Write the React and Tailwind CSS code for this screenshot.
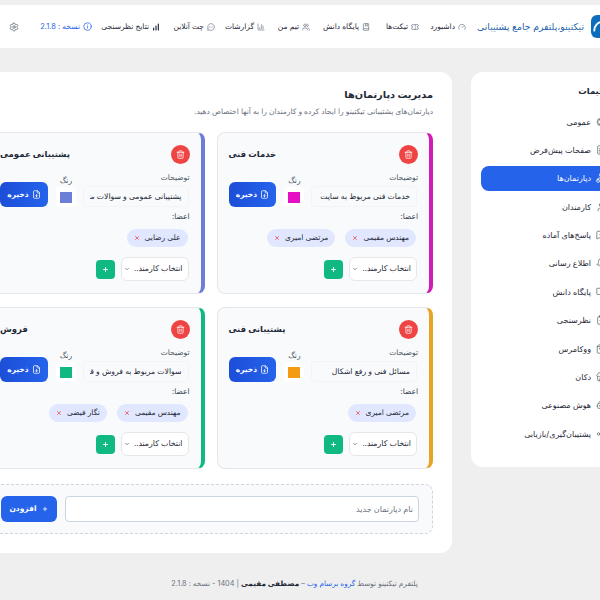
import { Gauge, Ticket, BookMarked, Users, BarChart3, MessageCircleMore, BarChart, Info, Settings, Cog, FileText, Network, User, MessageSquarePlus, Bell, BookOpen, ClipboardCheck, ShoppingBag, Store, Bot, Share2, Trash2, FileDown, Plus, X, ChevronDown } from 'lucide-react'

const nav = [
  { icon: Gauge, label: 'داشبورد', width: 'w-[47px]' },
  { icon: Ticket, label: 'تیکت‌ها', width: 'w-[49px]' },
  { icon: BookMarked, label: 'پایگاه دانش', width: 'w-[60px]' },
  { icon: Users, label: 'تیم من', width: 'w-[45px]' },
  { icon: BarChart3, label: 'گزارشات', width: 'w-[50px]' },
  { icon: MessageCircleMore, label: 'چت آنلاین', width: 'w-[55px]' },
  { icon: BarChart, label: 'نتایج نظرسنجی', width: 'w-[68px]', strong: true },
]

const side = [
  { icon: Cog, label: 'عمومی' },
  { icon: FileText, label: 'صفحات پیش‌فرض' },
  { icon: Network, label: 'دپارتمان‌ها', active: true },
  { icon: User, label: 'کارمندان' },
  { icon: MessageSquarePlus, label: 'پاسخ‌های آماده' },
  { icon: Bell, label: 'اطلاع رسانی' },
  { icon: BookOpen, label: 'پایگاه دانش' },
  { icon: ClipboardCheck, label: 'نظرسنجی' },
  { icon: ShoppingBag, label: 'ووکامرس' },
  { icon: Store, label: 'دکان' },
  { icon: Bot, label: 'هوش مصنوعی' },
  { icon: Share2, label: 'پشتیبان‌گیری/بازیابی' },
]

const departments = [
  { name: 'خدمات فنی', desc: 'خدمات فنی مربوط به سایت ها', color: 'bg-[#e60fc4]', border: 'border-r-[#d01bb8]', members: ['مهندس مقیمی', 'مرتضی امیری'] },
  { name: 'پشتیبانی عمومی', desc: 'پشتیبانی عمومی و سوالات متداول', color: 'bg-[#6b7fd7]', border: 'border-r-[#6b7fd7]', members: ['علی رضایی'] },
  { name: 'پشتیبانی فنی', desc: 'مسائل فنی و رفع اشکال', color: 'bg-[#f39c12]', border: 'border-r-[#e9a426]', members: ['مرتضی امیری'] },
  { name: 'فروش', desc: 'سوالات مربوط به فروش و قیمت', color: 'bg-[#10b981]', border: 'border-r-[#10b981]', members: ['مهندس مقیمی', 'نگار فیضی'] },
]

function DepartmentCard({ name, desc, color, border, members }) {
  return (
    <div className={`h-[162px] rounded-lg border border-[#e5e7eb] border-r-4 ${border} bg-[#f8fafc] pt-[12px] pr-[11px] pl-[11px]`}>
      <div className="flex items-center justify-between h-[19px]">
        <span className="w-[19px] h-[19px] rounded-full bg-[#ef4444] flex items-center justify-center text-white">
          <Trash2 size={9} />
        </span>
        <h3 className="text-[8.5px] font-bold text-[#1f2937] whitespace-nowrap">{name}</h3>
      </div>
      <div className="flex items-end mt-[8px] pr-px">
        <div className="w-[106px]">
          <div className="text-[7.5px] text-[#4b5563] leading-[12px] -mr-px">توضیحات</div>
          <input readOnly value={desc} className="mt-[2px] block w-full h-[21px] rounded bg-[#f8fafc] border border-[#f1f5f9] px-[6px] text-[7.7px] text-[#1f2937] outline-none" />
        </div>
        <div className="w-[22px] mr-[6px] flex flex-col items-center">
          <div className="text-[7.5px] text-[#4b5563] leading-[12px]">رنگ</div>
          <div className="w-[20px] h-[20px] bg-white rounded flex items-center justify-center">
            <span className={`block w-[12px] h-[11px] ${color}`} />
          </div>
        </div>
        <button className="mr-[7px] w-[48px] h-[25px] rounded-md bg-gradient-to-l from-[#2563eb] to-[#1d4ed8] text-white text-[7.5px] font-bold flex items-center justify-center gap-[3px]">
          <FileDown size={9} />
          ذخیره
        </button>
      </div>
      <div className="text-[7.5px] text-[#374151] leading-[12px] mt-[4px]">اعضا:</div>
      <div className="flex gap-[10px] mt-[6px] pr-[2px] h-[18px]">
        {members.map((m) => (
          <span key={m} className="h-[18px] rounded-full bg-[#e0e7ff] px-[7px] flex items-center gap-[5px] text-[7.5px] text-[#1f2937] whitespace-nowrap">
            {m}
            <X size={6} strokeWidth={3} className="text-[#ef4444]" />
          </span>
        ))}
      </div>
      <div className="flex items-center gap-[6px] mt-[10px] pr-px">
        <div className="w-[68px] h-[24px] rounded-md bg-white border border-[#e5e7eb] flex items-center justify-between pr-[5px] pl-[2px] text-[7.8px] text-[#1f2937] whitespace-nowrap">
          <span>انتخاب کارمند..</span>
          <ChevronDown size={6} className="shrink-0" />
        </div>
        <button className="w-[19px] h-[19px] rounded bg-[#10b981] text-white flex items-center justify-center">
          <Plus size={7} strokeWidth={3} />
        </button>
      </div>
    </div>
  )
}

export default function App() {
  return (
    <div dir="rtl" className="w-[600px] h-[600px] overflow-hidden bg-[#efefef] pt-[5px] font-['Inter','DejaVu_Sans',sans-serif]">
      <header className="h-[43px] bg-white flex items-center whitespace-nowrap text-[7.5px] text-[#1f2937]">
        <div className="w-[24px] h-[23px] -mr-[15px] ml-[7px] shrink-0 rounded-md bg-[#0a6ebd] flex items-center justify-center">
          <svg viewBox="0 0 24 24" width="24" height="23" fill="none" stroke="white" strokeWidth="2"><path d="M3 17a9 9 0 0 1 9-10" /></svg>
        </div>
        <span className="w-[118px] shrink-0 text-[9.3px] text-[#2563a8]">تیکتینو،پلتفرم جامع پشتیبانی</span>
        {nav.map(({ icon: Icon, label, width, strong }) => (
          <span key={label} className={`${width} shrink-0 flex items-center gap-[3px]`}>
            <Icon size={8} strokeWidth={strong ? 3.5 : 2} className={strong ? 'text-[#1f2937]' : 'text-[#6b7280]'} />
            {label}
          </span>
        ))}
        <span className="w-[73px] shrink-0 flex items-center gap-[3px] text-[#2563eb]">
          <Info size={9} />
          نسخه : 2.1.8
        </span>
        <Settings size={10} className="text-[#6b7280] shrink-0" />
      </header>

      <div className="flex gap-[19px] items-start mt-[24px] -mr-[51px]">
        <aside className="w-[180px] shrink-0 h-[395px] bg-white rounded-xl px-[10px] pt-[13px] text-[8px] text-[#1f2937]">
          <h2 className="h-[14px] mb-[10px] pr-[27px] text-[8.5px] font-bold text-[#1f2937]">تنظیمات</h2>
          <div className="flex flex-col gap-[3.4px]">
            {side.map(({ icon: Icon, label, active }) => (
              <div key={label} className={`h-[25px] rounded-lg flex items-center gap-[5px] pr-[35px] whitespace-nowrap ${active ? 'bg-[#2563eb] text-white' : ''}`}>
                <Icon size={10} className={active ? 'text-white' : 'text-[#6b7280]'} />
                {label}
              </div>
            ))}
          </div>
        </aside>

        <main className="w-[483px] shrink-0 h-[481px] bg-white rounded-xl px-[19px] pt-[15px]">
          <h1 className="text-[9.8px] leading-[16px] font-bold text-[#1f2937]">مدیریت دپارتمان‌ها</h1>
          <p className="mt-[3px] text-[7.5px] leading-[12px] text-[#6b7280]">دپارتمان‌های پشتیبانی تیکتینو را ایجاد کرده و کارمندان را به آنها اختصاص دهید.</p>
          <div className="mt-[14px] grid grid-cols-2 gap-x-[12px] gap-y-[13px]">
            {departments.map((d) => <DepartmentCard key={d.name} {...d} />)}
          </div>
          <div className="mt-[15px] h-[50px] rounded-lg border border-dashed border-[#d1d5db] bg-[#f8fafc] flex items-center gap-[8px] pr-[13px] pl-[12px]">
            <input placeholder="نام دپارتمان جدید" className="w-[355px] h-[26px] rounded border border-[#cbd5e1] bg-white px-[5px] text-[8px] placeholder:text-[#6b7280] outline-none" />
            <button className="w-[56px] h-[26px] rounded-md bg-[#2563eb] text-white text-[7.5px] font-bold flex items-center justify-center gap-[6px]">
              <Plus size={6} strokeWidth={3} />
              افزودن
            </button>
          </div>
        </main>
      </div>

      <footer className="mt-[25px] pr-[11px] text-center text-[7.3px] leading-[12px] text-[#6b7280] whitespace-nowrap">
        پلتفرم تیکتینو توسط <span className="text-[#2563eb]">گروه برسام وب</span> – <span className="font-bold text-[#1f2937]">مصطفی مقیمی</span> | 1404 - نسخه : 2.1.8
      </footer>
    </div>
  )
}
